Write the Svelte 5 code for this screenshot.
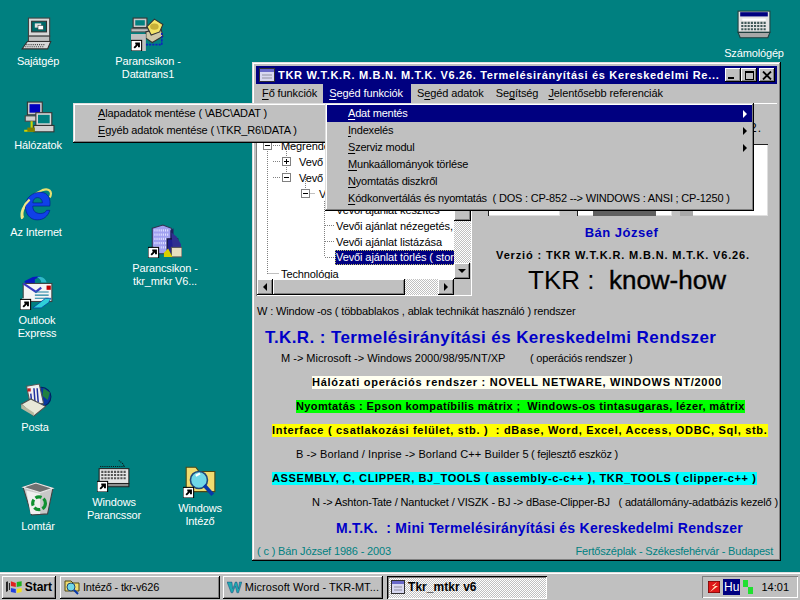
<script>
  const icons = [
    { id: 'pc', x: 38, y: 17, label: ['Sajátgép'] },
    { id: 'phone', x: 148, y: 17, label: ['Parancsikon -', 'Datatrans1'], link: true },
    { id: 'net', x: 38, y: 101, label: ['Hálózatok'] },
    { id: 'ie', x: 36, y: 188, label: ['Az Internet'] },
    { id: 'tower', x: 165, y: 224, label: ['Parancsikon -', 'tkr_mrkr V6...'], link: true },
    { id: 'outlook', x: 37, y: 276, label: ['Outlook', 'Express'], link: true },
    { id: 'mail', x: 35, y: 383, label: ['Posta'] },
    { id: 'bin', x: 38, y: 482, label: ['Lomtár'] },
    { id: 'kbd', x: 114, y: 458, label: ['Windows', 'Parancssor'], link: true },
    { id: 'finder', x: 200, y: 464, label: ['Windows', 'Intéző'], link: true },
    { id: 'calc', x: 754, y: 9, label: ['Számológép'] }
  ];

  const treeRows = [
    { text: 'Megrende', x: 24 },
    { text: 'Vevő', x: 42 },
    { text: 'Vevő', x: 42 },
    { text: 'V', x: 62 },
    { text: 'Vevői ajánlat készítés', x: 79 },
    { text: 'Vevői ajánlat nézegetés,', x: 79 },
    { text: 'Vevői ajánlat listázása', x: 79 },
    { text: 'Vevői ajánlat törlés ( storn', x: 79, selected: true },
    { text: 'Technológia', x: 24 }
  ];

  const menuItems = [
    ['A', 'dat mentés', true],
    ['I', 'ndexelés', true],
    ['S', 'zerviz modul', true],
    ['M', 'unkaállományok törlése', false],
    ['N', 'yomtatás diszkről', false],
    ['K', 'ódkonvertálás és nyomtatás\u00a0 ( DOS : CP-852 --> WINDOWS : ANSI ; CP-1250 )', false]
  ];
</script>

{#snippet arrow()}
  <rect x="0" y="22" width="10" height="10" fill="#fff" stroke="#000" stroke-width="1" />
  <path d="M3 29 L7 25 M4 25 H7.500 V28.500" stroke="#000" stroke-width="1.800" fill="none" />
{/snippet}

<div class="desktop">
  <main class="wall">
    {#each icons as ic}
      <div class="icon" style="left:{ic.x - 45}px; top:{ic.y}px">
        <svg width="34" height="34" viewBox="0 0 32 32">
          {#if ic.id === 'pc'}
            <rect x="7" y="1" width="20" height="17" fill="#d8d8d8" stroke="#404040" />
            <rect x="10" y="4" width="14" height="10" fill="#006868" stroke="#303030" />
            <rect x="13" y="6" width="6" height="4" fill="#e0e0e0" />
            <rect x="16" y="8" width="5" height="4" fill="#fff" stroke="#333" stroke-width=".5" />
            <rect x="7" y="18" width="20" height="5" fill="#c0c0c0" stroke="#404040" />
            <path d="M6 23 H28 L25 30 H1 Z" fill="#d8d8d8" stroke="#303030" />
            <path d="M5 26 H23 M4 28 H22" stroke="#404040" stroke-dasharray="1 1" />
          {:else if ic.id === 'phone'}
            <rect x="2" y="1" width="13" height="9" fill="#c8c8c8" stroke="#333" />
            <rect x="4" y="3" width="9" height="5" fill="#008080" />
            <rect x="0" y="11" width="17" height="3" fill="#c0c0c0" stroke="#555" />
            <path d="M14 14 L28 10 L30 18 L20 24 L14 20 Z" fill="#d0c8a8" stroke="#333" />
            <path d="M15 9 L22 2 L30 7 L27 14 L19 17 Z" fill="#f4e468" stroke="#333" />
            <ellipse cx="22" cy="9" rx="4" ry="3" fill="#c8b038" />
            <path d="M29 15 V26 H12" stroke="#1020c0" stroke-width="1.500" stroke-dasharray="2 1" fill="none" />
            <rect x="0" y="16" width="14" height="16" fill="#c0c0c0" />
            {@render arrow()}
          {:else if ic.id === 'net'}
            <rect x="6" y="1" width="14" height="12" fill="#c8c8c8" stroke="#333" />
            <rect x="8" y="3" width="10" height="8" fill="#0000c0" />
            <rect x="4" y="14" width="16" height="5" fill="#d0d0d0" stroke="#444" />
            <rect x="14" y="11" width="15" height="12" fill="#d8d8d8" stroke="#333" />
            <rect x="16" y="13" width="11" height="8" fill="#008080" />
            <rect x="12" y="23" width="19" height="6" fill="#d0d0d0" stroke="#333" />
            <path d="M10 19 V28 M3 28 H12" stroke="#d0d000" stroke-width="2" fill="none" />
            <rect x="6" y="25" width="7" height="4" fill="#808000" />
          {:else if ic.id === 'ie'}
            <path d="M4 28 C1 22 8 8 22 2 C28 0 32 3 29 9" stroke="#e8e070" stroke-width="2" fill="none" />
            <path d="M6 17 C6 9 13 4 20 4 C28 4 30 11 29 17 H13 C13 21 15 24 20 24 C23 24 25 23 26 21 H29 C27 27 23 30 17 30 C10 30 6 24 6 17 Z M13 14 H22 C22 11 20 9 17.500 9 C15 9 13 11 13 14 Z" fill="#1040e8" fill-rule="evenodd" stroke="#001890" stroke-width=".6" />
            <path d="M3 29 C1 24 4 16 10 11" stroke="#f0e888" stroke-width="2" fill="none" />
          {:else if ic.id === 'tower'}
            <path d="M4 4 L14 1 L22 4 V28 H4 Z" fill="#a0a0f0" stroke="#303050" />
            <path d="M6 6 H20 M6 10 H20 M6 14 H20 M6 18 H20 M6 22 H20" stroke="#e0e0ff" stroke-width="2" stroke-dasharray="1 1" />
            <path d="M21 6 L24 4 V14 H21 Z" fill="#202060" />
            <path d="M18 14 H28 V28 H18 Z" fill="#202090" stroke="#101030" />
            <path d="M22 8 L27 12 L31 19 V30 H24 Z" fill="#303090" />
            <rect x="22" y="22" width="10" height="9" fill="#e8e0c0" stroke="#555" />
            <path d="M15 27 L19 23 L23 31 H15 Z" fill="#d8d000" />
            {@render arrow()}
          {:else if ic.id === 'outlook'}
            <path d="M4 5 L12 1 L20 0 L14 3 L14 8 L6 8 Z" fill="#0818c0" />
            <path d="M16 1 C20 0 24 2 25 6 L20 6 C20 4 18 2 16 1 Z" fill="#30b8c8" />
            <rect x="3" y="7" width="27" height="17" fill="#f4f4f4" stroke="#404040" />
            <rect x="25" y="9" width="4" height="4" fill="#c00000" />
            <path d="M3 7 L15 15 L20 11" fill="none" stroke="#3838c0" stroke-width="2" />
            <path d="M14 15 H27 M14 18 H27 M14 21 H27" stroke="#1880a0" />
            <path d="M12 30 L24 21 L29 21 L27 25 L20 30 Z" fill="#30d0d8" stroke="#0040a0" stroke-width=".7" />
            <path d="M2 21 H9 V31 H2 Z" fill="#fff" />
            {@render arrow()}
          {:else if ic.id === 'mail'}
            <circle cx="22" cy="13" r="9" fill="#0838a0" stroke="#002060" />
            <path d="M24 5 L30 9 L28 16 L23 12 Z" fill="#208040" />
            <path d="M8 3 L20 1 L24 19 L12 22 Z" fill="#f0f0f0" stroke="#555" />
            <path d="M9 5 H12 V8 H9 Z" fill="#c02020" />
            <path d="M15 5 L16 18 M18 5 L19 18 M12 10 L13 19" stroke="#2030a0" stroke-width="1.400" />
            <path d="M3 20 L12 15 L26 22 L15 31 Z" fill="#e8e8d8" stroke="#505050" />
            <path d="M3 20 V24 L15 31 V28 Z" fill="#b8b8a0" />
          {:else if ic.id === 'bin'}
            <path d="M2 5 L14 1 L30 6 L25 30 L10 31 Z" fill="#c8c8c8" stroke="#404040" />
            <path d="M2 5 L14 1 L30 6 L18 10 Z" fill="#707070" stroke="#e8e8e8" />
            <path d="M5 8 L18 11 L18 30 L9 30 Z" fill="#f0f0f0" />
            <circle cx="17" cy="20" r="6" fill="none" stroke="#109030" stroke-width="3" stroke-dasharray="6 2" />
          {:else if ic.id === 'kbd'}
            <path d="M3 8 H26 L24 5 L20 2" stroke="#111" stroke-dasharray="1 1" fill="none" />
            <rect x="2" y="10" width="28" height="14" fill="#e4e4e4" stroke="#222" />
            <path d="M4 13 H27 M4 16 H27 M4 19 H27" stroke="#555" stroke-width="2" stroke-dasharray="2 1" />
            <path d="M2 24 H30 V27 H2 Z" fill="#909090" stroke="#222" />
            <rect x="0" y="22" width="10" height="10" fill="#fff" />
            {@render arrow()}
          {:else if ic.id === 'finder'}
            <path d="M3 3 H12 L15 7 H30 V26 H3 Z" fill="#f0dc70" stroke="#504810" />
            <circle cx="15" cy="15" r="8" fill="#70d8e8" stroke="#204878" stroke-width="1.500" />
            <path d="M12 11 L16 9" stroke="#fff" stroke-width="2" />
            <path d="M20 20 L28 29" stroke="#0838a8" stroke-width="3.500" />
            {@render arrow()}
          {:else if ic.id === 'calc'}
            <rect x="1" y="2" width="30" height="20" fill="#e4e4e4" stroke="#204040" />
            <rect x="3" y="3" width="26" height="4" fill="#000080" />
            <rect x="5" y="9" width="22" height="2" fill="#fff" />
            <path d="M4 13 H28 M4 16 H28 M4 19 H28" stroke="#405858" stroke-width="2" stroke-dasharray="2 1" />
            <path d="M1 22 H31 L29 27 H3 Z" fill="#a8a8a8" stroke="#204040" />
          {/if}
        </svg>
        <div class="label">
          {#each ic.label as line}<div>{line}</div>{/each}
        </div>
      </div>
    {/each}

    <section class="window">
      <header class="title">
        <svg class="appicon" width="16" height="14" viewBox="0 0 16 14">
          <rect x=".5" y=".5" width="15" height="13" fill="#d8d8f0" stroke="#303030" />
          <rect x="1" y="1" width="14" height="3" fill="#6868c8" />
          <path d="M3 7 H13 M3 10 H13" stroke="#9090a0" />
        </svg>
        <span class="caption">TKR W.T.K.R. M.B.N. M.T.K. V6.26. Termelésirányítási és Kereskedelmi Re...</span>
        <div class="btns">
          <button class="capbtn" aria-label="min"><i class="mn"></i></button>
          <button class="capbtn" aria-label="max"><i class="mx"></i></button>
          <button class="capbtn close" aria-label="close">
            <svg width="10" height="9" viewBox="0 0 10 9"><path d="M1 0.500 L9 8.500 M9 0.500 L1 8.500" stroke="#000" stroke-width="1.800" /></svg>
          </button>
        </div>
      </header>

      <nav class="menubar">
        <span><u>F</u>ő funkciók</span>
        <span class="active"><u>S</u>egéd funkciók</span>
        <span>S<u>e</u>géd adatok</span>
        <span>Se<u>g</u>ítség</span>
        <span class="last"><u>J</u>elentősebb referenciák</span>
      </nav>

      <div class="body">
        <div class="top">
          <div class="tree">
            <div class="treeview">
              <svg class="lines" width="197" height="176">
                <g stroke="#808080" stroke-dasharray="1 1" fill="none">
                  <path d="M10.500 36 V170 M10.500 168.500 H22" />
                  <path d="M29.500 44 V72 M29.500 40.500 H40" />
                  <path d="M48.500 72 V88 M48.500 88.500 H58" />
                  <path d="M67.500 96 V152 M68 104.500 H78 M68 120.500 H78 M68 136.500 H78 M68 152.500 H78" />
                  <path d="M16 40.500 H24 M16 56.500 H24 M16 72.500 H24" />
                </g>
                <g fill="#fff" stroke="#808080">
                  <rect x="6.500" y="36.500" width="8" height="8" />
                  <rect x="25.500" y="52.500" width="8" height="8" />
                  <rect x="25.500" y="68.500" width="8" height="8" />
                  <rect x="44.500" y="84.500" width="8" height="8" />
                </g>
                <path d="M8 40.500 H13 M27 56.500 H32 M29.500 54 V59 M27 72.500 H32 M46 88.500 H51" stroke="#000" />
              </svg>
              <div class="rows">
                {#each treeRows as row}
                  <div class="treerow" style="padding-left:{row.x}px">
                    <span class:sel={row.selected}>{row.text}</span>
                  </div>
                {/each}
              </div>
            </div>
            <div class="vbar">
              <div class="thumb"></div>
              <div class="track"></div>
              <div class="sbtn"><i class="tri down"></i></div>
            </div>
            <div class="hbar">
              <div class="sbtn"><i class="tri left"></i></div>
              <div class="hthumb"></div>
              <div class="track"></div>
              <div class="sbtn"><i class="tri right"></i></div>
            </div>
            <div class="corner"></div>
          </div>

          <div class="side">
            <div class="addr">2.</div>
            <div class="photos">
              <div class="photo one"></div>
              <div class="photo two"><b></b></div>
              <div class="photo three"><b></b></div>
            </div>
            <div class="name">Bán József</div>
            <div class="ver">Verzió : TKR W.T.K.R. M.B.N. M.T.K. V6.26.</div>
            <div class="how">TKR :&nbsp; <span>know-how</span></div>
          </div>
        </div>

        <div class="row r-w">W : Window -os ( többablakos , ablak technikát használó ) rendszer</div>
        <div class="row r-head">T.K.R. : Termelésirányítási és Kereskedelmi Rendszer</div>
        <div class="row r-m"><span class="a1">M -&gt; Microsoft -&gt; Windows 2000/98/95/NT/XP</span><span class="note">( operációs rendszer )</span></div>
        <div class="row hl i1"><span class="ivory">Hálózati operációs rendszer : NOVELL NETWARE, WINDOWS NT/2000</span></div>
        <div class="row hl i2"><span class="green">Nyomtatás : Epson kompatíbilis mátrix ;&nbsp; Windows-os tintasugaras, lézer, mátrix</span></div>
        <div class="row hl i3"><span class="yellow">Interface ( csatlakozási felület, stb. )&nbsp; : dBase, Word, Excel, Access, ODBC, Sql, stb.</span></div>
        <div class="row r-b"><span class="a2">B -&gt; Borland / Inprise -&gt; Borland C++ Builder 5</span><span class="note">( fejlesztő eszköz )</span></div>
        <div class="row hl i3"><span class="cyan">ASSEMBLY, C, CLIPPER, BJ_TOOLS ( assembly-c-c++ ), TKR_TOOLS ( clipper-c++ )</span></div>
        <div class="row r-n">N -&gt; Ashton-Tate / Nantucket / VISZK - BJ -&gt; dBase-Clipper-BJ&nbsp;&nbsp; ( adatállomány-adatbázis kezelő )</div>
        <div class="row r-mtk">M.T.K.&nbsp; : Mini Termelésirányítási és Kereskedelmi Rendszer</div>
        <div class="row r-foot"><span class="f1">( c ) Bán József 1986 - 2003</span><span class="f2">Fertőszéplak - Székesfehérvár - Budapest</span></div>
      </div>
    </section>

    <div class="popup sub">
      <div class="item"><span><u>A</u>lapadatok mentése ( \ABC\ADAT )</span></div>
      <div class="item"><span><u>E</u>gyéb adatok mentése ( \TKR_R6\DATA )</span></div>
    </div>

    <div class="popup drop">
      {#each menuItems as m, i}
        <div class="item" class:on={i === 0}>
          <span><u>{m[0]}</u>{m[1]}</span>
          {#if m[2]}<i class="tri right"></i>{/if}
        </div>
      {/each}
    </div>
  </main>

  <footer class="taskbar">
    <button class="tb start">
      <svg width="16" height="15" viewBox="0 0 16 15">
        <path d="M0 2 L2 1 V11 L0 12 Z M3 3 H4 V10 H3 Z" fill="#222" />
        <path d="M5 1 L10 3 V7 L5 6 Z" fill="#e02020" />
        <path d="M11 2 L16 1 V6 L11 7 Z" fill="#20b020" />
        <path d="M5 8 L10 9 V13 L5 12 Z" fill="#2040e0" />
        <path d="M11 9 L16 8 V12 L11 13 Z" fill="#f0e020" />
      </svg>
      <b>Start</b>
    </button>
    <button class="tb task">
      <svg width="16" height="16" viewBox="0 0 16 16">
        <path d="M1 2 H7 L9 4 H15 V12 H1 Z" fill="#f0dc70" stroke="#504810" />
        <circle cx="7" cy="8" r="4" fill="#70d8e8" stroke="#204878" />
        <path d="M10 11 L14 15" stroke="#0838a8" stroke-width="2" />
      </svg>
      <span>Intéző - tkr-v626</span>
    </button>
    <button class="tb task word">
      <svg width="18" height="16" viewBox="0 0 18 16">
        <path d="M0 2 H6 L7 10 L10 2 H12 L14 10 L15 2 H18 L14 15 H12 L10 7 L7 15 H5 Z" fill="#20a8b0" stroke="#103070" stroke-width=".5" />
      </svg>
      <span>Microsoft Word - TKR-MT...</span>
    </button>
    <button class="tb task current">
      <svg width="14" height="14" viewBox="0 0 14 14">
        <rect x=".5" y=".5" width="13" height="13" fill="#d8d8f0" stroke="#303030" />
        <rect x="1" y="1" width="12" height="3" fill="#6868c8" />
        <path d="M3 7 H11 M3 10 H11" stroke="#9090a0" />
      </svg>
      <b>Tkr_mtkr v6</b>
    </button>
    <div class="tray">
      <svg width="12" height="12" viewBox="0 0 12 12">
        <rect width="12" height="12" fill="#e01818" stroke="#400" />
        <path d="M9 1 L4 5 H7 L2 11 L10 5 H6 Z" fill="#ffe8c0" />
      </svg>
      <span class="lang">Hu</span>
      <svg width="10" height="14" viewBox="0 0 10 14">
        <rect x="0" y="0" width="5" height="7" fill="#20e030" />
        <rect x="5" y="7" width="5" height="7" fill="#20e030" />
      </svg>
      <span class="clock">14:01</span>
    </div>
  </footer>
</div>

<style>
  :global(body) {
    margin: 0;
  }
  .desktop {
    width: 800px;
    height: 600px;
    display: flex;
    flex-direction: column;
    background: #008080;
    overflow: hidden;
    font-family: "Liberation Sans", Arial, sans-serif;
    font-size: 11px;
    color: #000;
  }
  .wall {
    flex: 1;
    position: relative;
  }
  u {
    text-decoration-thickness: 1px;
    text-underline-offset: 2px;
  }

  /* desktop icons */
  .icon {
    position: absolute;
    width: 90px;
    display: flex;
    flex-direction: column;
    align-items: center;
  }
  .label {
    margin-top: 4px;
    color: #fff;
    text-align: center;
    line-height: 13px;
    letter-spacing: -0.15px;
    white-space: nowrap;
  }

  /* window */
  .window {
    position: absolute;
    left: 252px;
    top: 62px;
    width: 529px;
    height: 499px;
    box-sizing: border-box;
    padding: 4px;
    background: #c0c0c0;
    box-shadow: inset -1px -1px #000, inset 1px 1px #dfdfdf, inset -2px -2px #808080, inset 2px 2px #fff;
    display: flex;
    flex-direction: column;
  }
  .title {
    height: 18px;
    flex: none;
    background: #000080;
    color: #fff;
    display: flex;
    align-items: center;
    padding-left: 3px;
  }
  .appicon {
    margin-right: 3px;
  }
  .caption {
    font-weight: bold;
    font-size: 11px;
    letter-spacing: 0.68px;
    white-space: nowrap;
    flex: 1;
    overflow: hidden;
  }
  .btns {
    display: flex;
    margin-right: 2px;
  }
  .capbtn {
    width: 16px;
    height: 14px;
    padding: 0;
    border: 0;
    background: #c0c0c0;
    box-shadow: inset -1px -1px #000, inset 1px 1px #fff, inset -2px -2px #808080;
    display: flex;
    align-items: center;
    justify-content: center;
    position: relative;
  }
  .close {
    margin-left: 2px;
  }
  .mn {
    width: 6px;
    height: 2px;
    background: #000;
    position: absolute;
    left: 3px;
    bottom: 3px;
  }
  .mx {
    width: 7px;
    height: 6px;
    border: 1px solid #000;
    border-top-width: 2px;
  }
  .menubar {
    height: 19px;
    flex: none;
    display: flex;
    align-items: center;
    border-bottom: 1px solid #fff;
    letter-spacing: -0.1px;
  }
  .menubar span {
    padding: 0 6px;
    line-height: 19px;
  }
  .menubar .active {
    background: #000080;
    color: #fff;
    padding-right: 8px;
  }
  .menubar .last {
    margin-left: -2px;
  }

  /* content */
  .body {
    flex: 1;
    display: flex;
    flex-direction: column;
    min-height: 0;
  }
  .top {
    display: flex;
    height: 192px;
    flex: none;
  }
  .tree {
    width: 216px;
    height: 192px;
    box-sizing: border-box;
    display: grid;
    grid-template-columns: 197px 17px;
    grid-template-rows: 174px 16px;
    box-shadow: inset 1px 1px #808080, inset -1px -1px #fff;
    padding: 1px;
    flex: none;
  }
  .treeview {
    position: relative;
    background: #fff;
    overflow: hidden;
  }
  .lines {
    position: absolute;
    left: 0;
    top: 0;
  }
  .rows {
    position: relative;
    padding-top: 33px;
  }
  .treerow {
    height: 16px;
    line-height: 16px;
    white-space: nowrap;
    letter-spacing: -0.1px;
  }
  .sel {
    display: inline-block;
    width: 120px;
    overflow: hidden;
    background: #000080;
    color: #fff;
    outline: 1px dotted #c0c060;
    outline-offset: -1px;
    line-height: 15px;
    margin-left: -1px;
    padding-left: 1px;
    vertical-align: top;
  }
  .vbar {
    display: flex;
    flex-direction: column;
  }
  .thumb {
    height: 116px;
    background: #c0c0c0;
    box-shadow: inset -1px -1px #000, inset 1px 1px #fff, inset -2px -2px #808080;
    flex: none;
  }
  .track {
    flex: 1;
    background: repeating-conic-gradient(#fff 0 25%, #c0c0c0 0 50%) 0 0 / 2px 2px;
  }
  .sbtn {
    width: 16px;
    height: 16px;
    flex: none;
    background: #c0c0c0;
    box-shadow: inset -1px -1px #000, inset 1px 1px #fff, inset -2px -2px #808080;
    display: flex;
    align-items: center;
    justify-content: center;
  }
  .hbar {
    display: flex;
  }
  .hthumb {
    width: 132px;
    flex: none;
    background: #c0c0c0;
    box-shadow: inset -1px -1px #000, inset 1px 1px #fff, inset -2px -2px #808080;
  }
  .corner {
    background: #c0c0c0;
  }
  .tri {
    display: block;
    width: 0;
    height: 0;
    border: 4px solid transparent;
  }
  .tri.down {
    border-top-color: #000;
    border-bottom-width: 0;
  }
  .tri.left {
    border-right-color: #000;
    border-left-width: 0;
  }
  .tri.right {
    border-left-color: #000;
    border-right-width: 0;
  }

  .side {
    flex: 1;
    display: flex;
    flex-direction: column;
    align-items: center;
    min-width: 0;
  }
  .addr {
    align-self: flex-end;
    height: 40px;
    padding: 16px 15px 0 0;
    box-sizing: border-box;
    font-size: 12px;
    line-height: 16px;
    letter-spacing: 1px;
  }
  .photos {
    align-self: stretch;
    height: 72px;
    flex: none;
    display: flex;
    padding-left: 16px;
    padding-right: 9px;
    gap: 17px;
  }
  .photo {
    background: #fff;
    box-shadow: inset 1px 1px #202020, inset -1px -1px #dfdfdf;
    flex: none;
  }
  .one {
    width: 72px;
  }
  .two {
    width: 95px;
    display: flex;
    justify-content: center;
    align-items: flex-end;
    margin-right: -9px;
  }
  .two b {
    width: 63px;
    height: 40px;
    background: #606060;
  }
  .three {
    width: 88px;
    display: flex;
  }
  .three b {
    width: 13px;
    background: #a8a8a8;
  }
  .name {
    margin-top: 9px;
    color: #0000c0;
    font-weight: bold;
    font-size: 13px;
    line-height: 16px;
    letter-spacing: 0.5px;
    margin-right: 6px;
  }
  .ver {
    margin-top: 7px;
    font-weight: bold;
    line-height: 14px;
    letter-spacing: 0.85px;
    white-space: nowrap;
    margin-right: 3px;
  }
  .how {
    margin-top: 4px;
    font-size: 26px;
    line-height: 28px;
    white-space: nowrap;
    margin-left: 5px;
  }
  .how span {
    -webkit-text-stroke: 0.4px #000;
  }

  .row {
    white-space: nowrap;
    display: flex;
    align-items: center;
    flex: none;
  }
  .r-w {
    height: 30px;
    padding-left: 1px;
    letter-spacing: -0.15px;
  }
  .r-head {
    height: 24px;
    padding-left: 9px;
    font-weight: bold;
    font-size: 17px;
    letter-spacing: 0.4px;
    color: #0000c8;
  }
  .r-m {
    height: 16px;
    margin-bottom: 4px;
  }
  .a1 {
    margin-left: 25px;
    width: 249px;
  }
  .note {
    letter-spacing: -0.2px;
  }
  .r-b {
    height: 24px;
  }
  .a2 {
    margin-left: 40px;
    width: 235px;
    letter-spacing: 0.1px;
  }
  .hl {
    height: 24px;
    font-weight: bold;
  }
  .hl span {
    line-height: 13px;
    height: 13px;
  }
  .i1 {
    padding-left: 56px;
  }
  .i2 {
    padding-left: 40px;
  }
  .i3 {
    padding-left: 16px;
  }
  .ivory {
    background: #fffff0;
    letter-spacing: 0.73px;
  }
  .green {
    background: #00ff00;
    letter-spacing: 0.38px;
  }
  .yellow {
    background: #ffff00;
    letter-spacing: 0.7px;
  }
  .cyan {
    background: #00ffff;
    letter-spacing: 0.62px;
  }
  .r-n {
    height: 24px;
    padding-left: 56px;
    letter-spacing: -0.15px;
  }
  .r-mtk {
    height: 28px;
    padding-left: 80px;
    font-weight: bold;
    font-size: 14px;
    letter-spacing: 0.26px;
    color: #0000c8;
  }
  .r-foot {
    height: 18px;
    padding: 0 4px 0 1px;
    justify-content: space-between;
    color: #008080;
  }
  .f1 {
    letter-spacing: -0.15px;
  }
  .f2 {
    letter-spacing: -0.2px;
  }

  /* popups */
  .popup {
    position: absolute;
    top: 103px;
    background: #c0c0c0;
    box-shadow: inset -1px -1px #000, inset 1px 1px #dfdfdf, inset -2px -2px #808080, inset 2px 2px #fff;
    padding: 2px;
    box-sizing: border-box;
    white-space: nowrap;
  }
  .sub {
    left: 73px;
    width: 255px;
    height: 40px;
  }
  .drop {
    left: 325px;
    width: 429px;
    height: 108px;
  }
  .item {
    height: 17px;
    line-height: 17px;
    display: flex;
    align-items: center;
    justify-content: space-between;
    padding: 0 5px 0 23px;
    letter-spacing: -0.15px;
  }
  .drop .item {
    padding-left: 21px;
    letter-spacing: -0.2px;
  }
  .on {
    background: #000080;
    color: #fff;
  }
  .on .tri.right {
    border-left-color: #fff;
  }

  /* taskbar */
  .taskbar {
    height: 28px;
    flex: none;
    background: #c0c0c0;
    box-shadow: inset 0 1px #dfdfdf, inset 0 2px #fff;
    display: flex;
    align-items: center;
    gap: 3px;
    padding: 3px 2px 1px;
    box-sizing: border-box;
  }
  .tb {
    height: 23px;
    padding: 0 4px;
    border: 0;
    background: #c0c0c0;
    box-shadow: inset -1px -1px #000, inset 1px 1px #fff, inset -2px -2px #808080;
    display: flex;
    align-items: center;
    gap: 3px;
    font: inherit;
    color: #000;
    white-space: nowrap;
    flex: none;
  }
  .start {
    width: 54px;
    margin-right: 1px;
  }
  .start b {
    font-size: 12px;
  }
  .task {
    width: 160px;
    letter-spacing: -0.2px;
  }
  .word {
    letter-spacing: 0.05px;
  }
  .current {
    margin-left: 1px;
    background: repeating-conic-gradient(#fff 0 25%, #c0c0c0 0 50%) 0 0 / 2px 2px;
    box-shadow: inset 1px 1px #000, inset -1px -1px #fff, inset 2px 2px #808080;
    letter-spacing: 0.05px;
    font-size: 12px;
  }
  .tray {
    margin-left: auto;
    width: 96px;
    height: 22px;
    box-sizing: border-box;
    box-shadow: inset 1px 1px #808080, inset -1px -1px #fff;
    display: flex;
    align-items: center;
    padding-left: 6px;
  }
  .lang {
    background: #000080;
    color: #fff;
    font-size: 12px;
    padding: 0 1px;
    line-height: 16px;
    margin: 0 3px;
  }
  .clock {
    margin-left: auto;
    margin-right: 9px;
  }
</style>
